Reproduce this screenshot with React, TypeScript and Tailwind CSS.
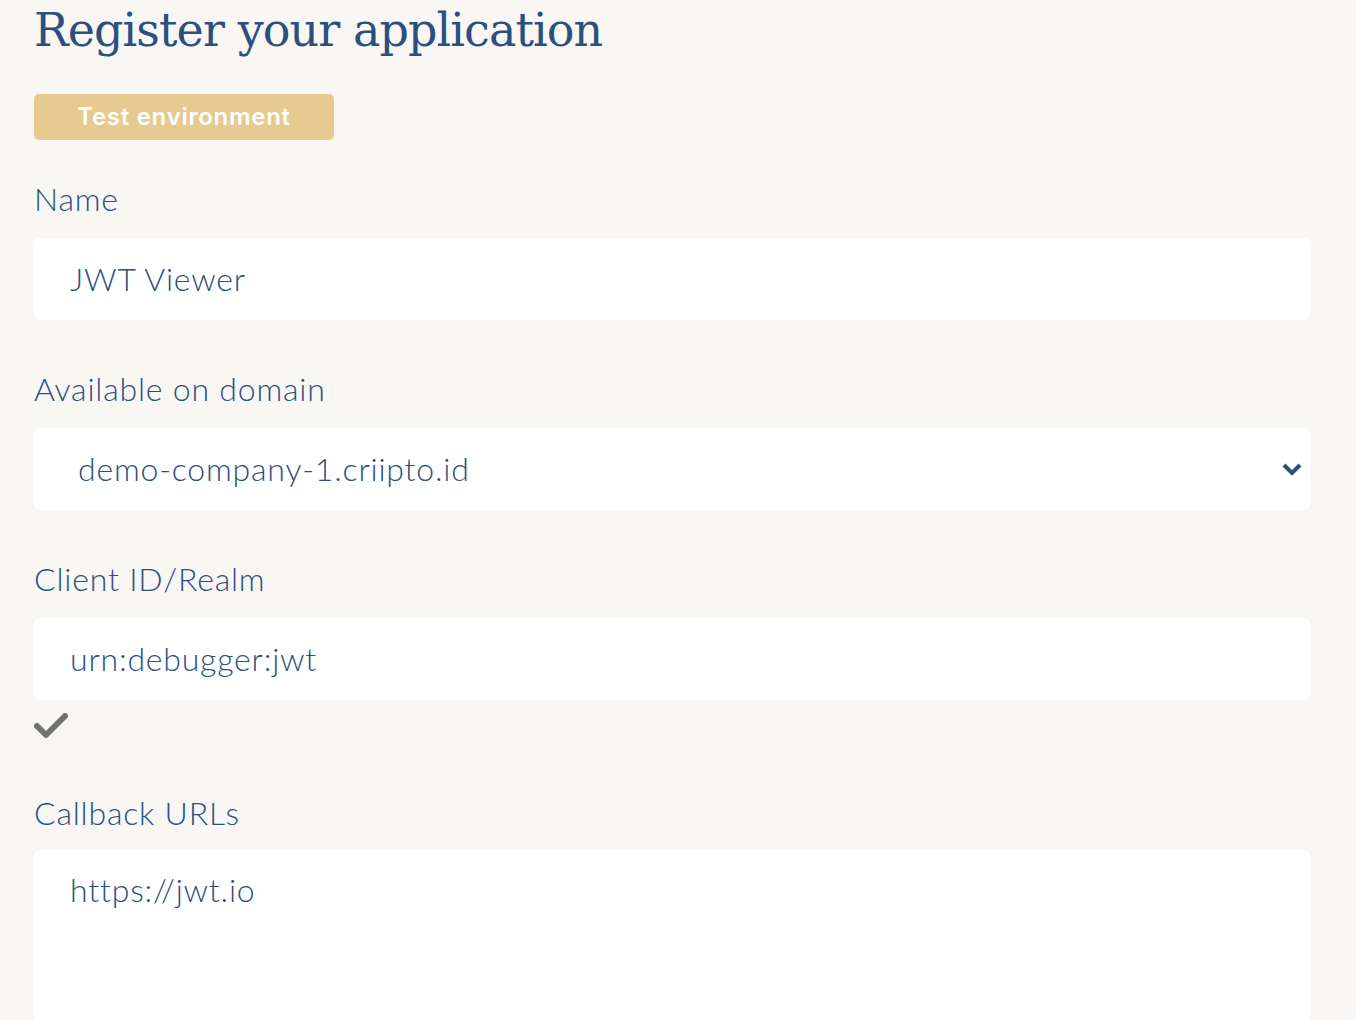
import React from 'react';

const text = 'text-[#2c4f80]';
const body = "font-['Lato','Open_Sans',sans-serif] font-light tracking-[0.05em]";

function Label({ children, className = '' }: { children: React.ReactNode; className?: string }) {
  return <div className={`text-[32px] leading-[36px] ${text} ${className}`}>{children}</div>;
}

function Field({ value, className = '' }: { value: string; className?: string }) {
  return (
    <div className={`flex h-[82px] items-center rounded-[6px] bg-white px-[36px] text-[32px] ${text} ${className}`}>
      {value}
    </div>
  );
}

export default function App() {
  return (
    <div className={`min-h-[1020px] w-full overflow-hidden bg-[#f9f7f4] pl-[34px] pr-[46px] ${body}`}>
      <h1 className={`pt-[2px] font-['DejaVu_Serif','Liberation_Serif',serif] text-[46px] font-normal leading-[56px] tracking-[-0.02em] ${text}`}>
        Register your application
      </h1>
      <div className="mt-[36px] flex h-[46px] w-[300px] items-center justify-center rounded-[5px] bg-[#e6ca8f] font-['Inter',sans-serif] text-[24px] font-semibold tracking-[0.03em] text-white">
        Test environment
      </div>

      <Label className="mt-[41px]">Name</Label>
      <Field value="JWT Viewer" className="mt-[21px]" />

      <Label className="mt-[51px]">Available on domain</Label>
      <div className={`mt-[21px] flex h-[82px] items-center justify-between rounded-[6px] bg-white pl-[44px] pr-[6px] text-[32px] ${text}`}>
        <span>demo-company-1.criipto.id</span>
        <svg width="20" height="14" viewBox="0 0 20 14" className="mr-[2px]">
          <polyline points="2,3 10,11 18,3" fill="none" stroke="#2c4f80" strokeWidth="4" />
        </svg>
      </div>

      <Label className="mt-[51px]">Client ID/Realm</Label>
      <Field value="urn:debugger:jwt" className="mt-[21px]" />
      <svg width="34" height="26" viewBox="0 0 34 26" className="mt-[13px]">
        <polyline points="3,13 12,22 31,3" fill="none" stroke="#727272" strokeWidth="6" strokeLinecap="round" strokeLinejoin="round" />
      </svg>

      <Label className="mt-[56px]">Callback URLs</Label>
      <div className={`mt-[19px] h-[200px] rounded-[6px] bg-white px-[36px] pt-[20px] text-[32px] leading-[40px] ${text}`}>
        https://jwt.io
      </div>
    </div>
  );
}
